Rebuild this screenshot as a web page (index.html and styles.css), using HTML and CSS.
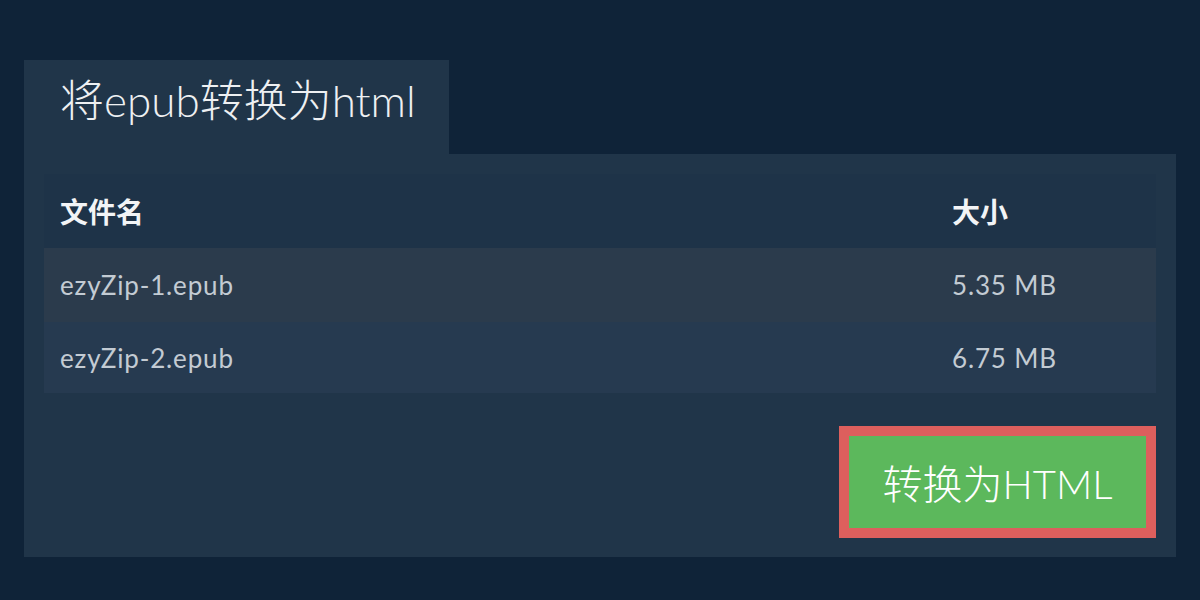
FILE: index.html
```html
<!DOCTYPE html>
<html lang="zh">
<head>
<meta charset="utf-8">
<title>将epub转换为html</title>
<link rel="stylesheet" href="styles.css">
</head>
<body>
<div class="page">
  <div class="tab"><h1 class="title">将epub转换为html</h1></div>
  <div class="panel">
    <div class="table">
      <div class="row head">
        <div class="c-name">文件名</div>
        <div class="c-size">大小</div>
      </div>
      <div class="row r1">
        <div class="c-name">ezyZip-1.epub</div>
        <div class="c-size">5.35 MB</div>
      </div>
      <div class="row r2">
        <div class="c-name">ezyZip-2.epub</div>
        <div class="c-size">6.75 MB</div>
      </div>
    </div>
    <div class="actions">
      <button class="convert">转换为HTML</button>
    </div>
  </div>
</div>
</body>
</html>
```
FILE: styles.css
```css
html, body {
  margin: 0;
  padding: 0;
  background: #0f2338;
  width: 1200px;
  height: 600px;
  overflow: hidden;
  font-family: Lato, "Noto Sans CJK SC", sans-serif;
}
.page {
  padding: 60px 24px 0 24px;
}
.tab {
  display: inline-block;
  background: #203549;
  height: 94px;
  width: 425px;
  padding: 0 0 0 36px;
  box-sizing: border-box;
}
.title {
  margin: 0;
  font-weight: 300;
  font-size: 44px;
  line-height: 80px;
  color: #eef0f2;
  white-space: nowrap;
}
.panel {
  background: #203549;
  padding: 20px 20px 19px 20px;
}
.table {
  display: flex;
  flex-direction: column;
}
.row {
  display: flex;
  align-items: center;
  padding-left: 16px;
}
.head {
  height: 74px;
  background: #1e3348;
  color: #f2f4f6;
  font-weight: 700;
  font-size: 28px;
}
.r1, .r2 {
  color: #c3cbd3;
  font-size: 26px;
  letter-spacing: 0.85px;
}
.r1 {
  height: 74px;
  background: #2b3b4c;
}
.r2 {
  height: 71px;
  background: #263a50;
}
.c-name {
  width: 892px;
}
.c-size {
  flex: 1;
}
.actions {
  display: flex;
  justify-content: flex-end;
  margin-top: 33px;
}
.convert {
  width: 317px;
  height: 112px;
  border: 10px solid #dd5f5d;
  background: #5cb85c;
  color: #ffffff;
  font-family: Lato, "Noto Sans CJK SC", sans-serif;
  font-weight: 300;
  font-size: 40px;
  padding: 0;
  box-sizing: border-box;
}
```
